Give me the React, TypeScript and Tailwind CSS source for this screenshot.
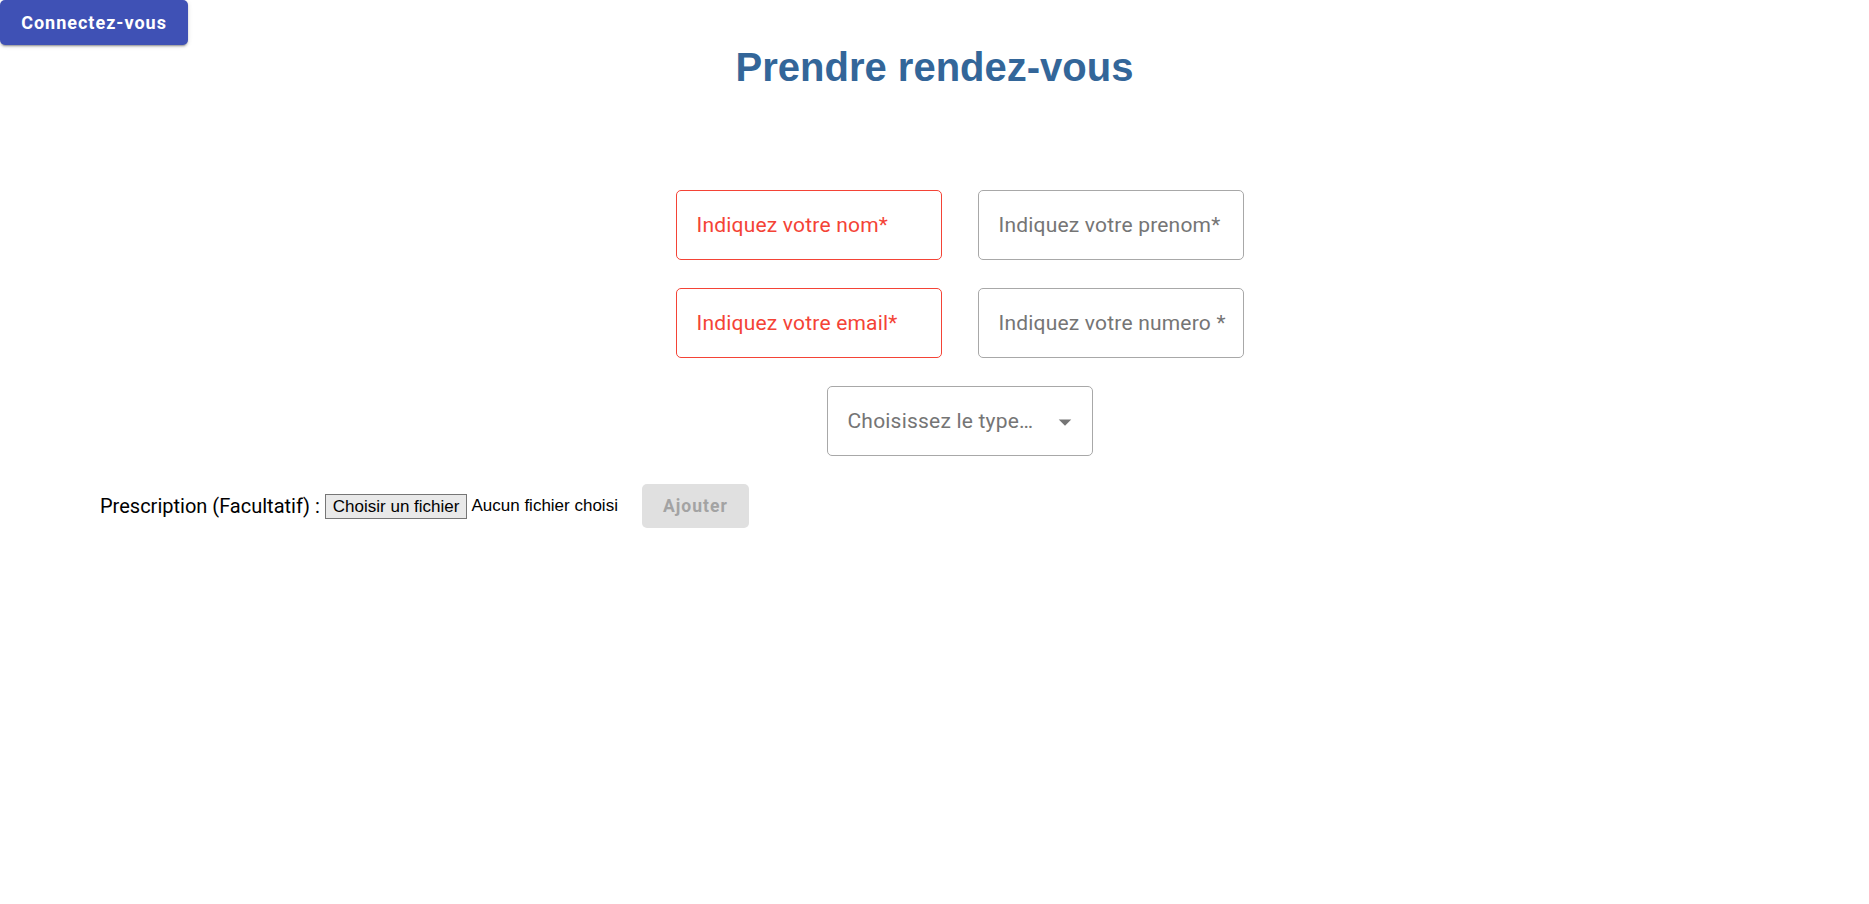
import { useState } from "react";

const roboto = { fontFamily: "Roboto, 'Liberation Sans', sans-serif" };

type FieldProps = {
  label: string;
  error?: boolean;
};

const Field = ({ label, error }: FieldProps) => {
  return (
    <div
      className={
        "flex h-[70px] w-[266px] items-center rounded-[5px] border pl-[20px] pt-[2px] " +
        (error ? "border-[#f44336]" : "border-[#a8a8a8]")
      }
    >
      <span
        className={
          "text-[21px] tracking-[0.2px] font-['Roboto',sans-serif] " +
          (error ? "text-[#f44336]" : "text-[#757575]")
        }
      >
        {label}
      </span>
    </div>
  );
};

export default function App() {
  const [fileName] = useState("");

  return (
    <div className="min-h-screen w-full bg-white" style={roboto}>
      <div className="grid grid-cols-[1fr_auto_1fr] items-start">
        <div>
          <button className="h-[45px] w-[188px] rounded-[5px] bg-[#3f51b5] text-[18px] font-bold tracking-[1px] text-white shadow-[0_3px_1px_-2px_rgba(0,0,0,0.2),0_2px_2px_0_rgba(0,0,0,0.14),0_1px_5px_0_rgba(0,0,0,0.12)] font-['Roboto',sans-serif]">
            Connectez-vous
          </button>
        </div>
        <h1 className="mt-[44px] text-[40px] leading-[46px] font-bold text-[#336699] font-['Liberation_Sans',Arial,sans-serif]">
          Prendre rendez-vous
        </h1>
        <div />
      </div>

      <form className="mt-[100px] flex flex-col items-center pl-[50px]">
        <div className="flex gap-[36px]">
          <Field label="Indiquez votre nom*" error />
          <Field label="Indiquez votre prenom*" />
        </div>
        <div className="mt-[28px] flex gap-[36px]">
          <Field label="Indiquez votre email*" error />
          <Field label="Indiquez votre numero *" />
        </div>
        <div className="mt-[28px] flex h-[70px] w-[266px] items-center justify-between rounded-[5px] border border-[#a8a8a8] pl-[20px] pr-[12px] pt-[2px]">
          <span className="text-[21px] tracking-[0.2px] text-[#757575] font-['Roboto',sans-serif]">
            Choisissez le type…
          </span>
          <svg viewBox="0 0 24 24" className="h-[30px] w-[30px] fill-[#757575]">
            <path d="M7 10l5 5 5-5z" />
          </svg>
        </div>
      </form>

      <div className="mt-[28px] flex items-center pl-[100px]">
        <span className="text-[20px] text-black font-['Roboto',sans-serif]">
          Prescription (Facultatif) :
        </span>
        <label className="ml-[5px] flex items-center font-['Liberation_Sans',Arial,sans-serif] text-[17px] text-black">
          <span className="flex h-[25px] items-center border border-[#767676] bg-[#e9e9e9] px-[7px] leading-none">
            Choisir un fichier
          </span>
          <span className="ml-[4px]">{fileName || "Aucun fichier choisi"}</span>
        </label>
        <button
          disabled
          className="ml-[24px] h-[44px] w-[107px] rounded-[5px] bg-[#e0e0e0] text-[17.5px] font-bold tracking-[1px] text-[#a3a3a3] font-['Roboto',sans-serif]"
        >
          Ajouter
        </button>
      </div>
    </div>
  );
}
